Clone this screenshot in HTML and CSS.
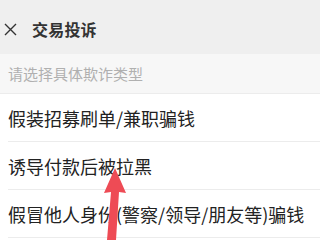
FILE: index.html
```html
<!DOCTYPE html>
<html lang="zh-CN">
<head>
    <meta charset="UTF-8">
    <meta name="viewport" content="width=device-width, initial-scale=1.0">
    <title>交易投诉</title>
    <link rel="stylesheet" href="styles.css">
</head>
<body>
    <div class="header">
        <svg class="close-icon" width="13" height="13" viewBox="0 0 13 13">
            <path d="M1 1 L12 12 M12 1 L1 12" stroke="#333" stroke-width="1.4" fill="none"/>
        </svg>
        <span class="title">交易投诉</span>
    </div>

    <div class="hint">请选择具体欺诈类型</div>

    <ul class="list">
        <li>假装招募刷单/兼职骗钱</li>
        <li>诱导付款后被拉黑</li>
        <li>假冒他人身份(警察/领导/朋友等)骗钱</li>
    </ul>

    <!-- red arrow drawn over the list -->
    <svg class="arrow" width="320" height="240" viewBox="0 0 320 240">
        <polygon points="115,168 126,193 119,192 116,240 107,240 111,192 104,193" fill="#ee4b55"/>
    </svg>
</body>
</html>
```

FILE: styles.css
```css
body {
    margin: 0;
    width: 320px;
    height: 240px;
    overflow: hidden;
    position: relative;
    background-color: #fff;
    font-family: "Noto Sans CJK SC", "Noto Sans", sans-serif;
    color: #222;
}
.header {
    display: flex;
    align-items: center;
    height: 54px;
    padding: 4px 0 0 4px;
    box-sizing: border-box;
    background-color: #efefef;
}
.close-icon {
    margin-right: 15px;
}
.title {
    font-size: 16px;
    font-weight: bold;
    color: #333;
    letter-spacing: 0.2px;
}
.hint {
    height: 40px;
    display: flex;
    align-items: center;
    padding-left: 8px;
    background-color: #f7f7f7;
    border-bottom: 1px solid #ececec;
    box-sizing: border-box;
    font-size: 15px;
    color: #b0b0b0;
}
.list {
    list-style-type: none;
    margin: 0;
    padding: 0 0 0 8px;
}
.list li {
    height: 48px;
    display: flex;
    align-items: center;
    border-bottom: 1px solid #ececec;
    box-sizing: border-box;
    font-size: 18px;
    white-space: nowrap;
}
.arrow {
    position: absolute;
    top: 0;
    left: 0;
}
```
